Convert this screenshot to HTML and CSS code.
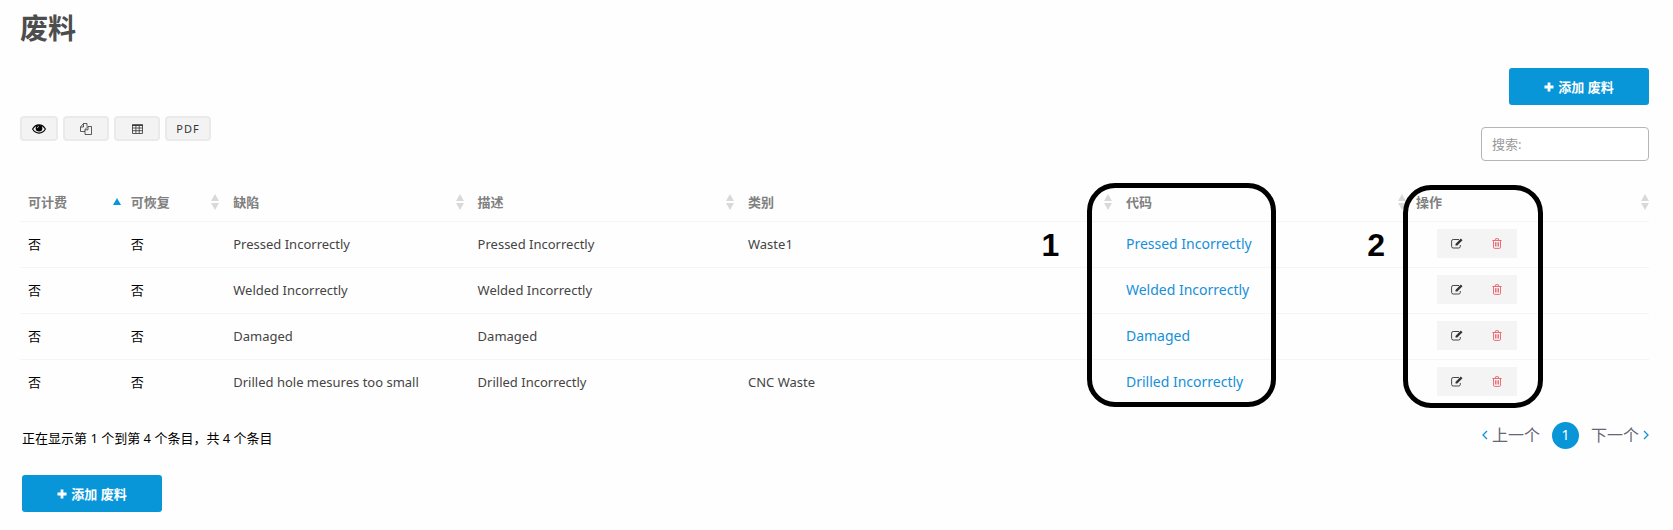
FILE: index.html
```html
<!DOCTYPE html>
<html lang="zh-CN">
<head>
<meta charset="utf-8">
<meta name="viewport" content="width=device-width, initial-scale=1">
<title>废料</title>
<link rel="stylesheet" href="styles.css">
</head>
<body>
<svg class="sprite" aria-hidden="true">
  <symbol id="plus" viewBox="0 0 10 10"><path d="M3.6 0.5h2.8v3.1h3.1v2.8H6.4v3.1H3.6V6.4H0.5V3.6h3.1z" fill="currentColor"/></symbol>
  <symbol id="eye" viewBox="0 0 14 10"><path d="M.6 5C2.2 2.300 4.400 .9 7 .9S11.800 2.300 13.400 5C11.800 7.700 9.600 9.100 7 9.100S2.200 7.700 .6 5z" fill="none" stroke="currentColor" stroke-width="1.100"/><circle cx="7" cy="4.300" r="3.300" fill="currentColor"/><path d="M5.300 4.200A1.800 1.800 0 0 1 7 2.500" fill="none" stroke="#f3f3f3" stroke-width=".7"/></symbol>
  <symbol id="copy" viewBox="0 0 12 12"><path d="M5 8.500H.5V4L3.500.5H7v3M3.500.5V4h-3M5 11.500V6.500L8 3.500h3.500v8zM8 3.500v3.300H5" fill="none" stroke="currentColor" stroke-width=".8" stroke-linejoin="round"/></symbol>
  <symbol id="grid" viewBox="0 0 11 10"><path d="M.5 1h10v8.500H.5zM.5 4h10M.5 6.700h10M3.900 1v8.500M7.200 1v8.500" fill="none" stroke="currentColor" stroke-width=".8"/><path d="M0 .4h11v1.500H0z" fill="currentColor"/></symbol>
  <symbol id="edit" viewBox="0 0 12 11"><path d="M8 1.500H2.200A1.600 1.600 0 0 0 .6 3.100v5.300A1.600 1.600 0 0 0 2.200 10h5.500a1.600 1.600 0 0 0 1.600-1.600V7" fill="none" stroke="currentColor" stroke-width=".9"/><path d="M9.800.6l1.700 1.700-5.200 5.300H4.500V5.900z" fill="currentColor"/></symbol>
  <symbol id="trash" viewBox="0 0 10 11"><path d="M.4 2.500h9.200M3.100 2.300l.6-1.600h2.600l.6 1.600M1.500 2.500v6.700c0 .8.400 1.200 1.100 1.200h4.800c.7 0 1.100-.4 1.100-1.200V2.500M3.500 4.200v4.300M5 4.200v4.300M6.500 4.200v4.300" fill="none" stroke="currentColor" stroke-width=".9"/></symbol>
  <symbol id="sort" viewBox="0 0 8 16"><path d="M4 0l4 7H0zM0 9h8l-4 7z" fill="currentColor"/></symbol>
  <symbol id="asc" viewBox="0 0 8 16"><path d="M4 4l4 7H0z" fill="currentColor"/></symbol>
  <symbol id="prev" viewBox="0 0 6 10"><path d="M5 1L1 5l4 4" fill="none" stroke="currentColor" stroke-width="1.300"/></symbol>
  <symbol id="next" viewBox="0 0 6 10"><path d="M1 1l4 4-4 4" fill="none" stroke="currentColor" stroke-width="1.300"/></symbol>
</svg>
<main class="page">
  <h1 class="title">废料</h1>
  <div class="actions">
    <button class="add" type="button"><svg class="i10"><use href="#plus"/></svg>添加 废料</button>
  </div>
  <div class="toolbar">
    <div class="tools">
      <button class="tool tool-eye" type="button" aria-label="可见列"><svg class="i-eye"><use href="#eye"/></svg></button>
      <button class="tool" type="button" aria-label="复制"><svg class="i12"><use href="#copy"/></svg></button>
      <button class="tool" type="button" aria-label="表格"><svg class="i-grid"><use href="#grid"/></svg></button>
      <button class="tool" type="button">PDF</button>
    </div>
    <input class="search" type="search" placeholder="搜索:" aria-label="搜索">
  </div>
  <div class="table-wrap">
    <table class="table">
      <colgroup><col class="c1"><col class="c2"><col class="c3"><col class="c4"><col class="c5"><col class="c6"><col class="c7"></colgroup>
      <thead>
        <tr>
          <th><div class="head near">可计费<svg class="sort active"><use href="#asc"/></svg></div></th>
          <th><div class="head">可恢复<svg class="sort"><use href="#sort"/></svg></div></th>
          <th><div class="head">缺陷<svg class="sort"><use href="#sort"/></svg></div></th>
          <th><div class="head">描述<svg class="sort"><use href="#sort"/></svg></div></th>
          <th><div class="head">类别<svg class="sort"><use href="#sort"/></svg></div></th>
          <th><div class="head near">代码<svg class="sort"><use href="#sort"/></svg></div></th>
          <th><div class="head edge">操作<svg class="sort"><use href="#sort"/></svg></div></th>
        </tr>
      </thead>
      <tbody>
        <tr><td class="flag">否</td><td class="flag">否</td><td>Pressed Incorrectly</td><td>Pressed Incorrectly</td><td>Waste1</td><td><a class="code" href="#">Pressed Incorrectly</a></td>
          <td><div class="ops"><button class="op" type="button" aria-label="编辑"><svg class="i-edit"><use href="#edit"/></svg></button><button class="op del" type="button" aria-label="删除"><svg class="i-trash"><use href="#trash"/></svg></button></div></td></tr>
        <tr><td class="flag">否</td><td class="flag">否</td><td>Welded Incorrectly</td><td>Welded Incorrectly</td><td></td><td><a class="code" href="#">Welded Incorrectly</a></td>
          <td><div class="ops"><button class="op" type="button" aria-label="编辑"><svg class="i-edit"><use href="#edit"/></svg></button><button class="op del" type="button" aria-label="删除"><svg class="i-trash"><use href="#trash"/></svg></button></div></td></tr>
        <tr><td class="flag">否</td><td class="flag">否</td><td>Damaged</td><td>Damaged</td><td></td><td><a class="code" href="#">Damaged</a></td>
          <td><div class="ops"><button class="op" type="button" aria-label="编辑"><svg class="i-edit"><use href="#edit"/></svg></button><button class="op del" type="button" aria-label="删除"><svg class="i-trash"><use href="#trash"/></svg></button></div></td></tr>
        <tr><td class="flag">否</td><td class="flag">否</td><td>Drilled hole mesures too small</td><td>Drilled Incorrectly</td><td>CNC Waste</td><td><a class="code" href="#">Drilled Incorrectly</a></td>
          <td><div class="ops"><button class="op" type="button" aria-label="编辑"><svg class="i-edit"><use href="#edit"/></svg></button><button class="op del" type="button" aria-label="删除"><svg class="i-trash"><use href="#trash"/></svg></button></div></td></tr>
      </tbody>
    </table>
    <span class="num num-one">1</span>
    <div class="frame frame-one"></div>
    <span class="num num-two">2</span>
    <div class="frame frame-two"></div>
  </div>
  <div class="footer">
    <p class="info">正在显示第 1 个到第 4 个条目，共 4 个条目</p>
    <nav class="pager" aria-label="分页">
      <a class="page-link" href="#"><svg class="chev"><use href="#prev"/></svg>上一个</a>
      <a class="current" href="#" aria-current="page">1</a>
      <a class="page-link" href="#">下一个<svg class="chev"><use href="#next"/></svg></a>
    </nav>
  </div>
  <div class="bottom">
    <button class="add" type="button"><svg class="i10"><use href="#plus"/></svg>添加 废料</button>
  </div>
</main>
</body>
</html>
```
FILE: styles.css
```css
* { box-sizing: border-box; }
body {
  margin: 0;
  background: #fefefe;
  color: #444;
  font: 13px/20px "Noto Sans", "Noto Sans CJK SC", sans-serif;
}
button, input { font: inherit; }
button { cursor: pointer; }
a { text-decoration: none; }
.sprite { display: none; }
.page { padding: 8px 24px 20px 20px; }
.title {
  margin: 0;
  color: #4d4d4d;
  font-size: 28px;
  line-height: 40px;
}
.actions { display: flex; justify-content: flex-end; padding-top: 20px; }
.add {
  display: flex;
  align-items: center;
  justify-content: center;
  gap: 4px;
  width: 140px;
  height: 37px;
  border: 0;
  border-radius: 3px;
  background: #0896d9;
  color: #fff;
  font-size: 13px;
  font-weight: 700;
}
.i10 { width: 10px; height: 10px; }
.i12 { width: 12px; height: 12px; }
.i-eye { width: 14px; height: 10px; }
.i-grid { width: 11px; height: 10px; }
.i-edit { width: 12px; height: 11px; }
.i-trash { width: 10px; height: 11px; }
.toolbar { display: flex; justify-content: space-between; padding-top: 11px; }
.tools { display: flex; gap: 5px; }
.tool {
  display: flex;
  align-items: center;
  justify-content: center;
  width: 46px;
  height: 25px;
  padding: 0;
  border: 2px solid #eaeaea;
  border-radius: 4px;
  background: #f3f3f3;
  color: #333;
  font-size: 11px;
  letter-spacing: 1px;
}
.tool-eye { width: 38px; color: #000; }
.search {
  width: 168px;
  height: 34px;
  margin-top: 11px;
  padding: 0 10px;
  border: 1px solid #b4b4bd;
  border-radius: 4px;
  background: #fff;
  appearance: none;
}
.search::placeholder { color: #999; }
.table-wrap { position: relative; padding-top: 23px; }
.table { width: 100%; border-collapse: collapse; table-layout: fixed; }
.c1 { width: 6.3%; }
.c2 { width: 6.3%; }
.c3 { width: 15%; }
.c4 { width: 16.6%; }
.c5 { width: 23.2%; }
.c6 { width: 17.8%; }
.c7 { width: 14.8%; }
.table th { height: 37px; padding: 0 0 0 8px; text-align: left; }
.table td { height: 46px; padding: 0 0 1px 8px; }
.table tr { border-bottom: 1px solid #f5f5f5; }
.table tbody tr:last-child { border-bottom: 0; }
.head {
  display: flex;
  align-items: center;
  justify-content: space-between;
  padding-right: 6px;
  color: #808080;
  font-weight: 700;
}
.near { padding-right: 2px; }
.edge { padding-right: 0; }
.sort { width: 8px; height: 16px; color: #d9d9d9; }
.active { color: #0896d9; }
.flag { color: #000; }
.code { color: #1590d9; font-size: 14px; }
.ops { display: inline-flex; margin-left: 21px; background: #f4f4f4; vertical-align: middle; }
.op {
  display: flex;
  align-items: center;
  justify-content: center;
  width: 40px;
  height: 29px;
  padding: 0;
  border: 0;
  background: none;
  color: #333;
}
.del { color: #e8606a; }
.frame {
  position: absolute;
  border: 5px solid #000;
  border-radius: 28px;
  pointer-events: none;
}
.frame-one { left: 65.5%; top: 22px; width: 189px; height: 224px; }
.frame-two { left: 84.9%; top: 24px; width: 140px; height: 223px; }
.num {
  position: absolute;
  top: 68px;
  background: #fefefe;
  color: #000;
  font: 700 32px/32px "Liberation Sans", sans-serif;
}
.num-one { left: 62.7%; }
.num-two { left: 82.7%; }
.footer { display: flex; justify-content: space-between; padding: 16px 0 0 2px; }
.info { margin: 7px 0 0; color: #000; }
.pager { display: flex; align-items: center; gap: 12px; height: 28px; font-size: 16px; }
.page-link { display: flex; align-items: center; gap: 4px; color: #667; }
.chev { width: 6px; height: 10px; color: #1590d9; }
.current {
  display: flex;
  align-items: center;
  justify-content: center;
  width: 27px;
  height: 27px;
  border-radius: 50%;
  background: #0896d9;
  color: #fff;
  font-size: 14px;
}
.bottom { padding: 26px 0 0 2px; }
```
